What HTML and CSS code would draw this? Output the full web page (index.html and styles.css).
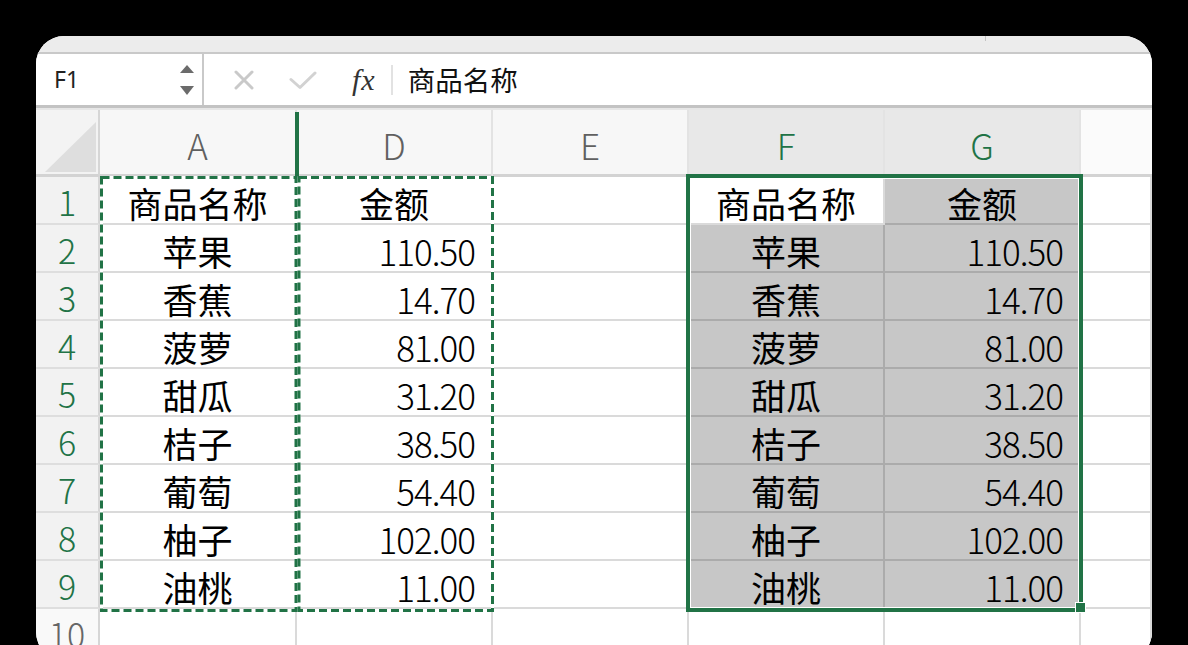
FILE: index.html
```html
<!DOCTYPE html>
<html lang="zh-CN">
<head>
<meta charset="utf-8">
<title>Excel</title>
<link rel="stylesheet" href="styles.css">
</head>
<body>
<div class="window">
  <div class="tabstrip"><span class="tick"></span></div>
  <div class="formulabar">
    <div class="namebox">
      <span class="cellref">F1</span>
      <span class="spinner">
        <svg width="14" height="30" viewBox="0 0 14 30"><path d="M7 0 L14 8 L0 8 Z" fill="#6b6b6b"/><path d="M0 21 L14 21 L7 30 Z" fill="#6b6b6b"/></svg>
      </span>
    </div>
    <div class="fx-area">
      <svg class="ic-x" width="20" height="20" viewBox="0 0 20 20"><path d="M2 2 L18 18 M18 2 L2 18" stroke="#c9c9c9" stroke-width="3" stroke-linecap="round"/></svg>
      <svg class="ic-check" width="28" height="19" viewBox="0 0 28 19"><path d="M2 8.5 L11 16.5 L26 2" fill="none" stroke="#d2d2d2" stroke-width="3" stroke-linecap="round" stroke-linejoin="round"/></svg>
      <span class="fx">fx</span>
      <span class="fsep"></span>
      <span class="ftext">商品名称</span>
    </div>
  </div>
  <div class="sheet">
    <div class="grid">
      <div class="corner"><span class="tri"></span></div>
      <div class="colhead">A</div>
      <div class="colhead">D</div>
      <div class="colhead">E</div>
      <div class="colhead sel">F</div>
      <div class="colhead sel">G</div>
      <div class="colhead rest"></div>

      <div class="rowhead sel">1</div>
      <div class="cell c">商品名称</div>
      <div class="cell c">金额</div>
      <div class="cell"></div>
      <div class="cell c">商品名称</div>
      <div class="cell c g">金额</div>
      <div class="cell"></div>

      <div class="rowhead sel">2</div>
      <div class="cell c">苹果</div>
      <div class="cell n">110.50</div>
      <div class="cell"></div>
      <div class="cell c g">苹果</div>
      <div class="cell n g">110.50</div>
      <div class="cell"></div>

      <div class="rowhead sel">3</div>
      <div class="cell c">香蕉</div>
      <div class="cell n">14.70</div>
      <div class="cell"></div>
      <div class="cell c g">香蕉</div>
      <div class="cell n g">14.70</div>
      <div class="cell"></div>

      <div class="rowhead sel">4</div>
      <div class="cell c">菠萝</div>
      <div class="cell n">81.00</div>
      <div class="cell"></div>
      <div class="cell c g">菠萝</div>
      <div class="cell n g">81.00</div>
      <div class="cell"></div>

      <div class="rowhead sel">5</div>
      <div class="cell c">甜瓜</div>
      <div class="cell n">31.20</div>
      <div class="cell"></div>
      <div class="cell c g">甜瓜</div>
      <div class="cell n g">31.20</div>
      <div class="cell"></div>

      <div class="rowhead sel">6</div>
      <div class="cell c">桔子</div>
      <div class="cell n">38.50</div>
      <div class="cell"></div>
      <div class="cell c g">桔子</div>
      <div class="cell n g">38.50</div>
      <div class="cell"></div>

      <div class="rowhead sel">7</div>
      <div class="cell c">葡萄</div>
      <div class="cell n">54.40</div>
      <div class="cell"></div>
      <div class="cell c g">葡萄</div>
      <div class="cell n g">54.40</div>
      <div class="cell"></div>

      <div class="rowhead sel">8</div>
      <div class="cell c">柚子</div>
      <div class="cell n">102.00</div>
      <div class="cell"></div>
      <div class="cell c g">柚子</div>
      <div class="cell n g">102.00</div>
      <div class="cell"></div>

      <div class="rowhead sel">9</div>
      <div class="cell c">油桃</div>
      <div class="cell n">11.00</div>
      <div class="cell"></div>
      <div class="cell c g">油桃</div>
      <div class="cell n g">11.00</div>
      <div class="cell"></div>

      <div class="rowhead">10</div>
      <div class="cell"></div>
      <div class="cell"></div>
      <div class="cell"></div>
      <div class="cell"></div>
      <div class="cell"></div>
      <div class="cell"></div>
    </div>

    <div class="hidden-marker"></div>
    <svg class="marquee" width="1116" height="520" viewBox="0 0 1116 520">
      <rect x="65.5" y="67.5" width="194.5" height="433" fill="none" stroke="#ffffff" stroke-width="3"/>
      <rect x="263" y="67.5" width="193.5" height="433" fill="none" stroke="#ffffff" stroke-width="3"/>
      <rect x="65.5" y="67.5" width="194.5" height="433" fill="none" stroke="#217346" stroke-width="3" stroke-dasharray="8 4"/>
      <rect x="263" y="67.5" width="193.5" height="433" fill="none" stroke="#217346" stroke-width="3" stroke-dasharray="8 4"/>
    </svg>
    <div class="selection"></div>
    <div class="fill-handle"></div>
  </div>
</div>
</body>
</html>
```

FILE: styles.css
```css
html, body {
  margin: 0;
  padding: 0;
}
body {
  width: 1188px;
  height: 645px;
  background: #000;
  overflow: hidden;
  font-family: "Noto Sans CJK SC", "Noto Sans", sans-serif;
}
.window {
  margin: 36px 0 0 36px;
  width: 1116px;
  height: 624px;
  background: #fff;
  border-radius: 28px;
  overflow: hidden;
}
.tabstrip {
  height: 16px;
  background: #ececec;
  border-bottom: 2px solid #c9c9c9;
  position: relative;
}
.tick {
  position: absolute;
  left: 949px;
  top: 0;
  width: 1px;
  height: 5px;
  background: #c4c4c4;
}
.formulabar {
  height: 51px;
  display: flex;
  border-bottom: 3px solid #c3c3c3;
  background: #fff;
}
.namebox {
  width: 168px;
  box-sizing: border-box;
  border-right: 2px solid #c9c9c9;
  display: flex;
  align-items: center;
  justify-content: space-between;
  padding: 0 8px 0 18px;
}
.cellref {
  font-family: "Noto Sans", "Open Sans", sans-serif;
  font-size: 23px;
  color: #222;
  line-height: 1;
}
.spinner {
  display: flex;
  align-items: center;
}
.spinner svg { display: block; }
.fx-area {
  flex: 1;
  display: flex;
  align-items: center;
  padding-left: 30px;
}
.ic-x { display: block; }
.ic-check { display: block; margin-left: 35px; margin-top: 2px; }
.fx {
  margin-left: 35px;
  font-family: "Liberation Serif", "DejaVu Serif", serif;
  font-style: italic;
  font-size: 30px;
  color: #333;
  line-height: 1;
  letter-spacing: 1px;
}
.fsep {
  margin-left: 15px;
  width: 2px;
  height: 30px;
  background: #e2e2e2;
}
.ftext {
  margin-left: 15px;
  font-size: 27.5px;
  color: #111;
  line-height: 1;
}
.sheet {
  position: relative;
  border-top: 2px solid #e6e6e6;
}
.grid {
  display: grid;
  grid-template-columns: 64px 197px 196px 196px 196px 196px 1fr;
  grid-template-rows: 67px repeat(10, 48px);
}
.corner {
  background: #f3f3f3;
  border-right: 2px solid #d6d6d6;
  border-bottom: 3px solid #d3d3d3;
  box-sizing: border-box;
  position: relative;
}
.tri {
  position: absolute;
  left: 9px;
  top: 12px;
  width: 51px;
  height: 50px;
  background: #dedede;
  clip-path: polygon(100% 0, 100% 100%, 0 100%);
}
.colhead {
  background: #f7f7f7;
  border-right: 2px solid #e3e3e3;
  border-bottom: 3px solid #d3d3d3;
  box-sizing: border-box;
  display: flex;
  align-items: center;
  justify-content: center;
  font-size: 35px;
  font-weight: 300;
  color: #606060;
  line-height: 1;
  padding-top: 4px;
}
.colhead.sel {
  background: #e8e8e8;
  color: #217346;
}
.colhead.rest {
  background: #fbfbfb;
  border-right: none;
}
.rowhead {
  background: #f9f9f9;
  border-right: 2px solid #d6d6d6;
  border-bottom: 2px solid #dedede;
  box-sizing: border-box;
  display: flex;
  align-items: center;
  justify-content: center;
  font-size: 34px;
  font-weight: 300;
  color: #666;
  line-height: 1;
  padding-top: 4px;
}
.rowhead.sel {
  background: #f2f2f2;
  color: #217346;
}
.cell {
  background: #fff;
  border-right: 2px solid #dadada;
  border-bottom: 2px solid #dadada;
  box-sizing: border-box;
  display: flex;
  align-items: center;
  font-size: 35px;
  color: #000;
  line-height: 1;
  padding-top: 4px;
}
.cell.c { justify-content: center; }
.cell.n {
  justify-content: flex-end;
  padding-right: 16px;
  letter-spacing: -1px;
  font-weight: 300;
  color: #000;
}
.cell.g {
  background: #c7c7c7;
  border-right-color: #ababab;
  border-bottom-color: #ababab;
}
.hidden-marker {
  position: absolute;
  left: 259px;
  top: 2px;
  width: 4px;
  height: 65px;
  background: #217346;
}
.marquee {
  position: absolute;
  left: 0;
  top: 0;
  pointer-events: none;
}
.selection {
  position: absolute;
  left: 650px;
  top: 64px;
  width: 397px;
  height: 438px;
  box-sizing: border-box;
  border: 4px solid #217346;
  box-shadow: inset 0 0 0 1px #fff;
}
.fill-handle {
  position: absolute;
  left: 1039px;
  top: 492px;
  width: 9px;
  height: 9px;
  background: #217346;
  border: 1px solid #fff;
}
```
